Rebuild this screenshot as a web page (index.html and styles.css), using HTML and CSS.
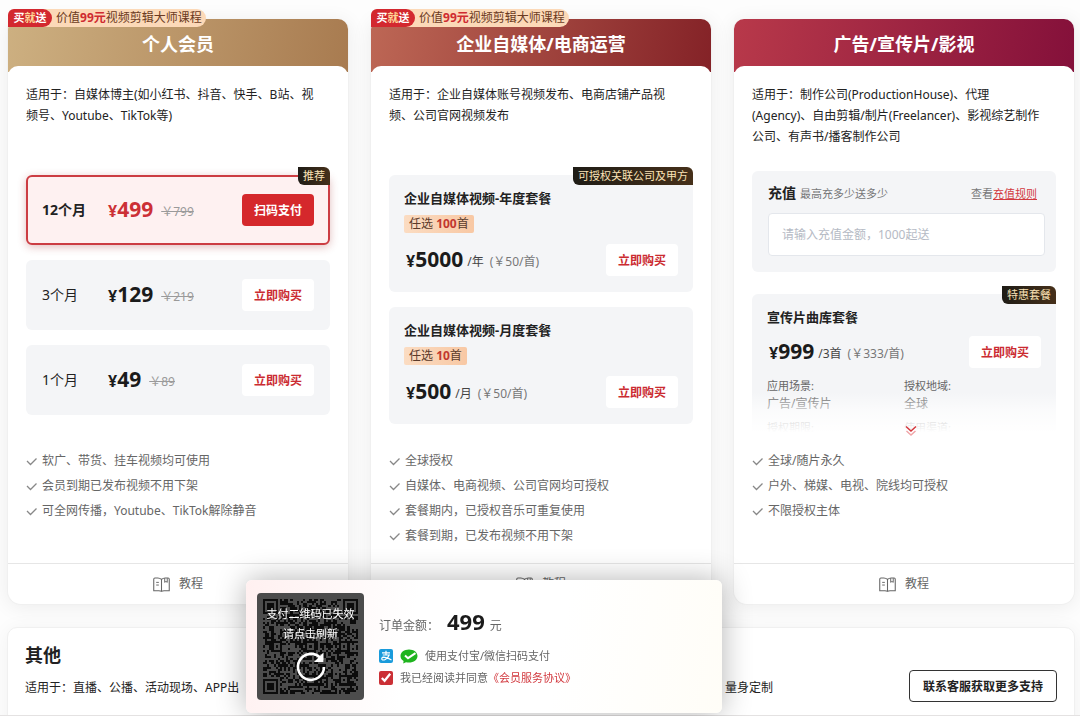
FILE: index.html
```html
<!DOCTYPE html>
<html lang="zh-CN">
<head>
    <meta charset="UTF-8">
    <title>会员套餐</title>
    <link rel="stylesheet" href="styles.css">
</head>
<body>
<svg class="defs" aria-hidden="true">
    <symbol id="check" viewBox="0 0 12 12">
        <path d="M1 6 4.500 9.500 10.500 3.500" fill="none" stroke="currentColor" stroke-width="1.300"/>
    </symbol>
    <symbol id="book" viewBox="0 0 16 14">
        <path d="M8 2.200Q6.500.8 4.500.8H1.800Q.7.8.7 2v10.800h4.800Q7.200 12.800 8 13.400 8.800 12.800 10.500 12.800h4.800V2Q15.300.8 14.200.8H11.500Q9.500.8 8 2.200v11" fill="none" stroke="currentColor"/>
        <path d="M3 5h2.500M3 7.500h2.500M11 1v4l1.200-1 1.200 1V1" fill="none" stroke="currentColor" stroke-width=".9"/>
    </symbol>
</svg>
<div class="page">
    <div class="cards">
        <section class="card">
            <div class="promo"><b>买<i>就</i>送</b><span>价值<em>99元</em>视频剪辑大师课程</span></div>
            <h2 class="card-head gold">个人会员</h2>
            <div class="card-body">
                <div class="card-main">
                    <p class="desc">适用于：自媒体博主(如小红书、抖音、快手、B站、视<br>频号、Youtube、TikTok等)</p>
                    <div class="plans">
                        <div class="plan row active">
                            <span class="tag">推荐</span>
                            <span class="month">12个月</span>
                            <span class="price"><small>¥</small>499</span>
                            <del>￥799</del>
                            <button class="buy">扫码支付</button>
                        </div>
                        <div class="plan row">
                            <span class="month">3个月</span>
                            <span class="price"><small>¥</small>129</span>
                            <del>￥219</del>
                            <button class="buy">立即购买</button>
                        </div>
                        <div class="plan row">
                            <span class="month">1个月</span>
                            <span class="price"><small>¥</small>49</span>
                            <del>￥89</del>
                            <button class="buy">立即购买</button>
                        </div>
                    </div>
                </div>
                <ul class="features">
                    <li><svg><use href="#check"/></svg>软广、带货、挂车视频均可使用</li>
                    <li><svg><use href="#check"/></svg>会员到期已发布视频不用下架</li>
                    <li><svg><use href="#check"/></svg>可全网传播，Youtube、TikTok解除静音</li>
                </ul>
            </div>
            <a class="guide" href="#"><svg><use href="#book"/></svg>教程</a>
        </section>

        <section class="card">
            <div class="promo"><b>买<i>就</i>送</b><span>价值<em>99元</em>视频剪辑大师课程</span></div>
            <h2 class="card-head red">企业自媒体/电商运营</h2>
            <div class="card-body">
                <div class="card-main">
                    <p class="desc">适用于：企业自媒体账号视频发布、电商店铺产品视<br>频、公司官网视频发布</p>
                    <div class="plans">
                        <div class="plan">
                            <span class="tag">可授权关联公司及甲方</span>
                            <h3>企业自媒体视频-年度套餐</h3>
                            <span class="chip">任选 <b>100</b>首</span>
                            <div class="buy-row">
                                <span class="price"><small>¥</small>5000</span>
                                <span class="unit">/年</span>
                                <span class="each">(￥50/首)</span>
                                <button class="buy">立即购买</button>
                            </div>
                        </div>
                        <div class="plan">
                            <h3>企业自媒体视频-月度套餐</h3>
                            <span class="chip">任选 <b>10</b>首</span>
                            <div class="buy-row">
                                <span class="price"><small>¥</small>500</span>
                                <span class="unit">/月</span>
                                <span class="each">(￥50/首)</span>
                                <button class="buy">立即购买</button>
                            </div>
                        </div>
                    </div>
                </div>
                <ul class="features">
                    <li><svg><use href="#check"/></svg>全球授权</li>
                    <li><svg><use href="#check"/></svg>自媒体、电商视频、公司官网均可授权</li>
                    <li><svg><use href="#check"/></svg>套餐期内，已授权音乐可重复使用</li>
                    <li><svg><use href="#check"/></svg>套餐到期，已发布视频不用下架</li>
                </ul>
            </div>
            <a class="guide" href="#"><svg><use href="#book"/></svg>教程</a>
        </section>

        <section class="card">
            <h2 class="card-head wine">广告/宣传片/影视</h2>
            <div class="card-body">
                <div class="card-main">
                    <p class="desc">适用于：制作公司(ProductionHouse)、代理<br>(Agency)、自由剪辑/制片(Freelancer)、影视综艺制作<br>公司、有声书/播客制作公司</p>
                    <div class="plans wide">
                        <div class="plan recharge">
                            <div class="recharge-head">
                                <label for="amount">充值</label>
                                <span>最高充多少送多少</span>
                                <span class="rule">查看<a href="#">充值规则</a></span>
                            </div>
                            <input id="amount" type="text" placeholder="请输入充值金额，1000起送">
                        </div>
                        <div class="plan folded">
                            <span class="tag">特惠套餐</span>
                            <h3>宣传片曲库套餐</h3>
                            <div class="buy-row">
                                <span class="price"><small>¥</small>999</span>
                                <span class="unit">/3首</span>
                                <span class="each">(￥333/首)</span>
                                <button class="buy">立即购买</button>
                            </div>
                            <dl class="scope">
                                <div><dt>应用场景:</dt><dd>广告/宣传片</dd></div>
                                <div><dt>授权地域:</dt><dd>全球</dd></div>
                                <div><dt>授权期限:</dt></div>
                                <div><dt>使用渠道:</dt></div>
                            </dl>
                            <button class="more" aria-label="展开">
                                <svg viewBox="0 0 12 12">
                                    <path d="M1 1.500 6 6 11 1.500" fill="none" stroke="#d4373d" stroke-width="1.500"/>
                                    <path d="M1.500 6 6 10 10.500 6" fill="none" stroke="#f0a5a8" stroke-width="1.500"/>
                                </svg>
                            </button>
                        </div>
                    </div>
                </div>
                <ul class="features">
                    <li><svg><use href="#check"/></svg>全球/随片永久</li>
                    <li><svg><use href="#check"/></svg>户外、梯媒、电视、院线均可授权</li>
                    <li><svg><use href="#check"/></svg>不限授权主体</li>
                </ul>
            </div>
            <a class="guide" href="#"><svg><use href="#book"/></svg>教程</a>
        </section>
    </div>

    <section class="other">
        <div class="other-text">
            <h2>其他</h2>
            <p><span>适用于：直播、公播、活动现场、APP出</span><span>量身定制</span></p>
        </div>
        <button class="contact">联系客服获取更多支持</button>
    </section>
</div>

<div class="pay">
    <button class="qr">
        <svg id="qr" viewBox="0 0 45 45" shape-rendering="crispEdges"></svg>
        <span>支付二维码已失效<br>请点击刷新</span>
        <svg class="refresh" viewBox="0 0 32 32">
            <path d="M25 6.500A13 13 0 1 0 29 16" fill="none" stroke="#fff" stroke-width="2.600"/>
            <path d="M28.500 1.500v9.500H19z" fill="#fff"/>
        </svg>
    </button>
    <div class="order">
        <p class="total">订单金额：<strong>499</strong>元</p>
        <p class="ways">
            <svg class="alipay" viewBox="0 0 14 14">
                <rect width="14" height="14" rx="2" fill="#1a9bdb"/>
                <path d="M3 3.800h8M7 1.800v4M3.800 6h6.400Q9 9 6.300 10.500 4 11.600 2.900 10.300 2.300 8.500 4.500 8.200 7 8.200 12.500 11" fill="none" stroke="#fff" stroke-width="1.200"/>
            </svg>
            <svg class="wechat" viewBox="0 0 18 15">
                <path d="M9 .5C4.200.5.5 3.300.5 7c0 2.100 1.200 3.900 3.100 5.100L3.200 14.600 6 13.200c.9.300 1.900.4 3 .4 4.800 0 8.500-2.900 8.500-6.600S13.800.5 9 .5z" fill="#1fb41f"/>
                <path d="M5 6.500 8 9.200 15.500 4.200" fill="none" stroke="#fff" stroke-width="2"/>
            </svg>
            使用支付宝/微信扫码支付
        </p>
        <p class="agree">
            <input id="agree" type="checkbox" checked>
            <label for="agree">我已经阅读并同意</label><a href="#">《会员服务协议》</a>
        </p>
    </div>
</div>
<script src="main.js"></script>
</body>
</html>
```
FILE: styles.css
```css
* {
    box-sizing: border-box;
}

body {
    height: 100vh;
    margin: 0;
    overflow: hidden;
    border-bottom: 1px solid #e4e2e2;
    background: #fdfdfd;
    color: #222;
    font: 12px/18px "Noto Sans", "Noto Sans CJK SC", sans-serif;
}

h2, h3, p, ul, dl, dd {
    margin: 0;
    padding: 0;
}

button, input {
    font-family: inherit;
}

button {
    cursor: pointer;
}

.defs {
    display: none;
}

.page {
    padding: 19px 5px 0 7px;
}

.cards {
    display: grid;
    grid-template-columns: repeat(3, 1fr);
    gap: 21px;
}

.card {
    position: relative;
    display: flex;
    flex-direction: column;
    border: 1px solid #f0f0f0;
    border-top: 0;
    border-radius: 10px 10px 14px 14px;
    background: #fff;
    box-shadow: 0 2px 20px rgba(0, 0, 0, .07);
}

.promo {
    position: absolute;
    top: -10px;
    left: 0;
    display: flex;
    height: 18px;
    padding-right: 4px;
    border-radius: 8px 9px 9px 0;
    background: #fcd9b8;
    color: #6b3a22;
}

.promo b {
    width: 44px;
    margin-right: 4px;
    border-radius: 6px 9px 9px 0;
    background: #d3282f;
    color: #fff;
    font-size: 11px;
    text-align: center;
}

.promo i {
    color: #ffd796;
    font-style: normal;
}

.promo em {
    color: #cf2b30;
    font-style: normal;
    font-weight: bold;
}

.card-head {
    height: 53px;
    border-radius: 10px 10px 0 0;
    color: #fff;
    font-size: 18px;
    line-height: 50px;
    text-align: center;
}

.gold {
    background: linear-gradient(100deg, #cdb081, #a87b50);
}

.red {
    background: linear-gradient(100deg, #bd6755, #842227);
}

.wine {
    background: linear-gradient(100deg, #b8394a, #84103a);
}

.card-body {
    flex: 1;
    margin-top: -6px;
    padding: 18px 18px 0;
    border-radius: 10px 10px 0 0;
    background: #fff;
}

.card-main {
    min-height: 364px;
}

.desc {
    min-height: 63px;
    line-height: 21px;
    white-space: nowrap;
}

.plans {
    display: flex;
    flex-direction: column;
    gap: 15px;
    margin-top: 28px;
}

.plans.wide {
    gap: 22px;
    margin-top: 24px;
}

.plan {
    position: relative;
    padding: 13px 15px 15px;
    border-radius: 6px;
    background: #f4f5f7;
}

.plan.row {
    display: flex;
    align-items: center;
    min-height: 70px;
    padding: 0 14px;
    border: 2px solid transparent;
}

.plan.active {
    border-color: #cc3d43;
    background: #fef1f1;
    box-shadow: 0 2px 8px rgba(160, 40, 40, .3);
}

.tag {
    position: absolute;
    top: -8px;
    right: 0;
    padding: 0 5px;
    border-radius: 0 6px 0 6px;
    background: linear-gradient(90deg, #1f1c16, #46301a);
    color: #fbe3b6;
    font-size: 11px;
    line-height: 18px;
}

.plan.active .tag {
    top: -10px;
    right: -2px;
}

.month {
    width: 66px;
    font-size: 14px;
}

.active .month {
    font-weight: bold;
}

.price {
    color: #1b1b1b;
    font-size: 21px;
    font-weight: bold;
    line-height: 32px;
}

.price small {
    font-size: 16px;
}

.active .price {
    color: #cc3036;
}

del {
    margin: 3px 0 0 8px;
    color: #9a9a9a;
}

.buy {
    width: 72px;
    height: 32px;
    margin-left: auto;
    padding: 0;
    border: 0;
    border-radius: 4px;
    background: #fff;
    color: #cb2b31;
    font-size: 12px;
    font-weight: bold;
}

.active .buy {
    background: #d5282c;
    color: #fff;
}

.plan h3 {
    font-size: 13px;
    line-height: 20px;
}

.chip {
    display: block;
    width: fit-content;
    margin: 7px 0 10px;
    padding: 0 5px;
    border-radius: 2px;
    background: linear-gradient(90deg, #fbdcc2, #f8c8a4);
    color: #5a3a2a;
}

.chip b {
    color: #c2372f;
}

.buy-row {
    display: flex;
    align-items: center;
    margin-top: 8px;
    padding-left: 2px;
}

.unit {
    margin: 3px 0 0 4px;
    color: #444;
}

.each {
    margin: 3px 0 0 6px;
    color: #777;
}

.recharge {
    padding: 13px 11px 16px 16px;
}

.recharge-head {
    display: flex;
    align-items: baseline;
    gap: 4px;
    height: 29px;
    padding-right: 8px;
    color: #777;
    font-size: 11px;
}

.recharge-head label {
    color: #222;
    font-size: 14px;
    font-weight: bold;
}

.rule {
    margin-left: auto;
}

.rule a {
    color: #d2393f;
}

.recharge input {
    display: block;
    width: 100%;
    height: 43px;
    padding: 0 13px;
    border: 1px solid #e4e7ec;
    border-radius: 4px;
    background: #fff;
    font-size: 12px;
}

.recharge input::placeholder {
    color: #b5bac4;
}

.folded {
    height: 142px;
}

/* 底部渐隐 */
.folded::after {
    content: "";
    position: absolute;
    inset: 98px 0 0;
    background: linear-gradient(rgba(255, 255, 255, 0), rgba(255, 255, 255, .6) 40%, #fff 92%);
}

.scope {
    display: grid;
    grid-template-columns: 1fr 1fr;
    row-gap: 6px;
    margin-top: 8px;
    color: #666;
}

.scope dt {
    font-size: 11px;
}

.more {
    position: absolute;
    bottom: -1px;
    left: calc(50% + 1px);
    z-index: 1;
    width: 12px;
    height: 12px;
    padding: 0;
    border: 0;
    background: none;
}

.more svg {
    display: block;
}

.features {
    min-height: 115px;
    color: #666;
    line-height: 25px;
    list-style: none;
}

.features li {
    display: flex;
    align-items: center;
    gap: 4px;
}

.features svg {
    width: 12px;
    height: 12px;
    color: #888;
}

.guide {
    display: flex;
    align-items: center;
    justify-content: center;
    gap: 9px;
    height: 41px;
    border-top: 1px solid #e6e6e6;
    color: #666;
    text-decoration: none;
}

.guide svg {
    width: 17px;
    height: 15px;
}

.other {
    display: flex;
    align-items: flex-start;
    justify-content: space-between;
    min-height: 120px;
    margin-top: 22px;
    padding: 16px 17px 0;
    border: 1px solid #f0f0f0;
    border-radius: 10px;
    background: #fff;
    box-shadow: 0 2px 20px rgba(0, 0, 0, .05);
}

.other-text {
    flex: 0 1 748px;
}

.other h2 {
    font-size: 18px;
    line-height: 22px;
}

.other p {
    display: flex;
    justify-content: space-between;
    margin-top: 13px;
}

.contact {
    height: 32px;
    margin-top: 26px;
    padding: 0 13px;
    border: 1px solid #333;
    border-radius: 4px;
    background: #fff;
    color: #222;
    font-size: 12px;
    font-weight: bold;
}

/* 支付弹窗 */
.pay {
    position: fixed;
    bottom: 3px;
    left: 246px;
    display: flex;
    gap: 15px;
    width: 476px;
    padding: 13px 11px;
    border-radius: 6px;
    background: linear-gradient(100deg, #fff0f0, #fff 35%, #fff 65%, #fffdf7);
    box-shadow: 0 0 30px rgba(0, 0, 0, .3);
}

.qr {
    position: relative;
    width: 107px;
    height: 107px;
    padding: 6px;
    border: 0;
    border-radius: 4px;
    background: #4c4c4c;
    color: #fff;
}

#qr {
    display: block;
}

.qr span {
    position: absolute;
    top: 11px;
    left: 0;
    width: 100%;
    font-size: 11px;
    line-height: 20px;
}

.refresh {
    position: absolute;
    top: 58px;
    left: 38px;
    width: 32px;
    height: 32px;
}

.order {
    padding-top: 13px;
    color: #666;
    font-size: 11px;
}

.order p {
    display: flex;
    align-items: center;
}

.order .total {
    align-items: baseline;
    font-size: 12px;
    line-height: 30px;
}

.total strong {
    margin: 0 5px 0 8px;
    color: #1b1b1b;
    font-size: 22px;
}

.order .ways {
    height: 22px;
    margin-top: 4px;
}

.alipay {
    width: 14px;
    height: 14px;
    margin-right: 7px;
}

.wechat {
    width: 18px;
    height: 15px;
    margin-right: 7px;
}

.order .agree {
    height: 22px;
}

.agree input {
    width: 14px;
    height: 14px;
    margin: 0 7px 0 0;
    accent-color: #cb2f35;
}

.agree a {
    color: #d2393f;
    text-decoration: none;
}
```
FILE: main.js
```js
/**
 * 绘制二维码
 * */
(function () {
    let size = 45;
    let seed = 20;
    let path = "";

    function random() {
        seed = (seed * 16807) % 2147483647;
        return seed / 2147483647;
    }

    // 定位图形和校正图形，从中心向外一圈黑一圈白
    let marks = [[3, 3, 4], [41, 3, 4], [3, 41, 4],
        [22, 6, 2], [6, 22, 2], [22, 22, 2], [38, 22, 2], [22, 38, 2], [38, 38, 2]];

    function dark(x, y) {
        for (let i = 0; i < marks.length; i++) {
            let d = Math.max(Math.abs(x - marks[i][0]), Math.abs(y - marks[i][1]));
            if (d <= marks[i][2]) {
                return marks[i][2] === 4 ? d !== 2 && d !== 4 : d !== 1;
            }
        }
        return random() < 0.5;
    }

    for (let y = 0; y < size; y++) {
        for (let x = 0; x < size; x++) {
            if (dark(x, y)) {
                path += "M" + x + " " + y + "h1v1h-1z";
            }
        }
    }
    let node = document.createElementNS("http://www.w3.org/2000/svg", "path");
    node.setAttribute("d", path);
    node.setAttribute("fill", "#0c0c0c");
    document.querySelector("#qr").appendChild(node);
})();
```
